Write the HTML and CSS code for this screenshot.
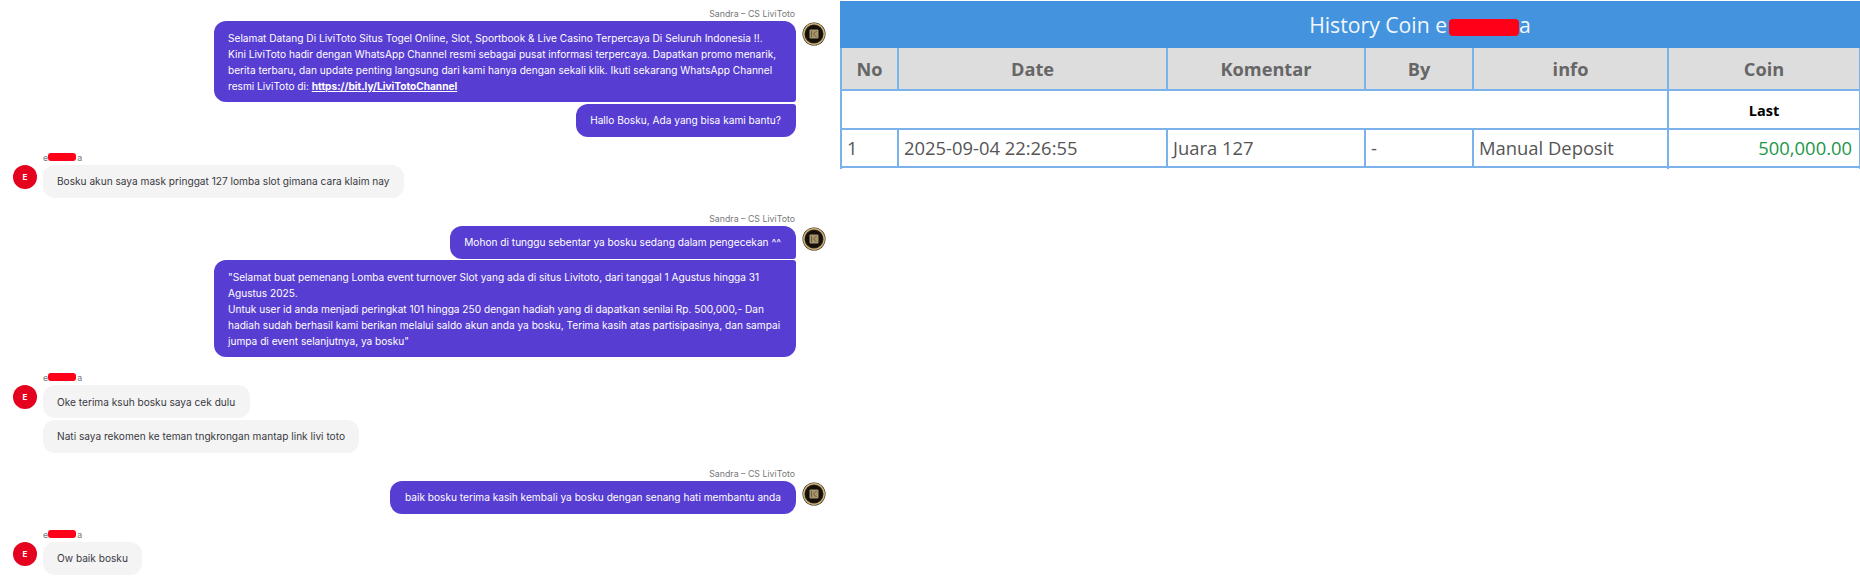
FILE: index.html
```html
<!DOCTYPE html>
<html lang="id">
<head>
<meta charset="UTF-8">
<title>History Coin</title>
<link rel="stylesheet" href="styles.css">
</head>
<body>

<svg class="defs" width="0" height="0">
  <symbol id="logo" viewBox="0 0 24 24">
    <circle cx="12" cy="12" r="11.5" fill="#2a2114"/>
    <circle cx="12" cy="12" r="10.2" fill="none" stroke="#cdb27a" stroke-width="1.5"/>
    <circle cx="12" cy="12" r="8.6" fill="#14110c"/>
    <rect x="7.5" y="7.5" width="9" height="9" rx="1" fill="#a8956c"/>
    <path d="M9.5 9v6M14.5 9l-3 3 3 3" fill="none" stroke="#6d5f43" stroke-width="1"/>
  </symbol>
</svg>

<!-- Chat -->
<div class="chat">

  <div class="group agent">
    <div class="meta">Sandra – CS LiviToto</div>
    <div class="row">
      <div class="bubbles">
        <div class="bubble">Selamat Datang Di LiviToto Situs Togel Online, Slot, Sportbook &amp; Live Casino Terpercaya Di Seluruh Indonesia !!.<br>Kini LiviToto hadir dengan WhatsApp Channel resmi sebagai pusat informasi terpercaya. Dapatkan promo menarik, berita terbaru, dan update penting langsung dari kami hanya dengan sekali klik. Ikuti sekarang WhatsApp Channel resmi LiviToto di: <a href="#">https://bit.ly/LiviTotoChannel</a></div>
        <div class="bubble">Hallo Bosku, Ada yang bisa kami bantu?</div>
      </div>
      <svg class="avatar"><use href="#logo"/></svg>
    </div>
  </div>

  <div class="group user">
    <div class="meta">e<span class="redact"></span>a</div>
    <div class="row">
      <div class="avatar initial">E</div>
      <div class="bubbles">
        <div class="bubble">Bosku akun saya mask pringgat 127 lomba slot gimana cara klaim nay</div>
      </div>
    </div>
  </div>

  <div class="group agent">
    <div class="meta">Sandra – CS LiviToto</div>
    <div class="row">
      <div class="bubbles">
        <div class="bubble">Mohon di tunggu sebentar ya bosku sedang dalam pengecekan ^^</div>
        <div class="bubble">"Selamat buat pemenang Lomba event turnover Slot yang ada di situs Livitoto, dari tanggal 1 Agustus hingga 31 Agustus 2025.<br>Untuk user id anda menjadi peringkat 101 hingga 250 dengan hadiah yang di dapatkan senilai Rp. 500,000,- Dan hadiah sudah berhasil kami berikan melalui saldo akun anda ya bosku, Terima kasih atas partisipasinya, dan sampai jumpa di event selanjutnya, ya bosku"</div>
      </div>
      <svg class="avatar"><use href="#logo"/></svg>
    </div>
  </div>

  <div class="group user">
    <div class="meta">e<span class="redact"></span>a</div>
    <div class="row">
      <div class="avatar initial">E</div>
      <div class="bubbles">
        <div class="bubble">Oke terima ksuh bosku saya cek dulu</div>
        <div class="bubble">Nati saya rekomen ke teman tngkrongan mantap link livi toto</div>
      </div>
    </div>
  </div>

  <div class="group agent">
    <div class="meta">Sandra – CS LiviToto</div>
    <div class="row">
      <div class="bubbles">
        <div class="bubble">baik bosku terima kasih kembali ya bosku dengan senang hati membantu anda</div>
      </div>
      <svg class="avatar"><use href="#logo"/></svg>
    </div>
  </div>

  <div class="group user">
    <div class="meta">e<span class="redact"></span>a</div>
    <div class="row">
      <div class="avatar initial">E</div>
      <div class="bubbles">
        <div class="bubble">Ow baik bosku</div>
      </div>
    </div>
  </div>

</div>

<!-- Tabel -->
<div class="history">
  <table>
    <colgroup>
      <col class="c-no"><col class="c-date"><col class="c-komentar"><col class="c-by"><col class="c-info"><col class="c-coin">
    </colgroup>
    <tr class="title">
      <th colspan="6">History Coin e<span class="redact"></span>a</th>
    </tr>
    <tr class="head">
      <th>No</th><th>Date</th><th>Komentar</th><th>By</th><th>info</th><th>Coin</th>
    </tr>
    <tr class="last">
      <td colspan="5"></td><td>Last</td>
    </tr>
    <tr class="data">
      <td>1</td><td>2025-09-04 22:26:55</td><td>Juara 127</td><td>-</td><td>Manual Deposit</td><td class="coin">500,000.00</td>
    </tr>
    <tr class="cut">
      <td colspan="5"></td><td></td>
    </tr>
  </table>
</div>

</body>
</html>
```

FILE: styles.css
```css
body {
  margin: 0;
  background: white;
  display: flex;
  height: 582px;
  overflow: hidden;
}

.defs { position: absolute; }

/* Chat */
.chat {
  width: 840px;
  flex: none;
  box-sizing: border-box;
  padding: 8px 14px 0 13px;
  display: flex;
  flex-direction: column;
  gap: 15px;
  font-family: Inter, "Liberation Sans", sans-serif;
  font-size: 10.15px;
  line-height: 16px;
}

.meta {
  font-size: 8.8px;
  line-height: 12px;
  color: #777;
  margin-bottom: 1px;
}

.row { display: flex; align-items: flex-start; }
.bubbles { display: flex; flex-direction: column; gap: 1.5px; }

.bubble {
  padding: 8.5px 14.5px;
  border-radius: 12px;
  max-width: 553px;
}
.bubble a { color: white; font-weight: 700; }

.avatar {
  width: 24px;
  height: 24px;
  flex: none;
}

/* Atendente */
.agent .meta { text-align: right; padding-right: 31px; }
.agent .row { justify-content: flex-end; gap: 6.5px; }
.agent .bubbles { align-items: flex-end; }
.agent .bubble { background: #583dd2; color: white; }
.agent .bubble:not(:last-child) { border-bottom-right-radius: 3px; }
.agent .bubble:not(:first-child) { border-top-right-radius: 3px; }
.agent .avatar { margin-top: 1px; }

/* Cliente */
.user .meta { padding-left: 30px; }
.user .row { gap: 5.5px; }
.user .bubbles { align-items: flex-start; }
.user .bubble { background: #f4f4f5; color: #3a3a3f; }

.initial {
  border-radius: 50%;
  background: #e4021f;
  color: white;
  font-size: 8px;
  font-weight: 700;
  line-height: 24px;
  text-align: center;
}

.redact {
  display: inline-block;
  background: #ff0018;
  border-radius: 3px;
}
.meta .redact { width: 28px; height: 8px; margin: 0 1px 0 0; }

/* Tabel */
.history {
  flex: 1;
  padding-top: 1px;
  font-family: "Open Sans", "Liberation Sans", sans-serif;
}

table {
  width: 1020px;
  table-layout: fixed;
  border-collapse: collapse;
}

.c-no { width: 57px; }
.c-date { width: 269px; }
.c-komentar { width: 198px; }
.c-by { width: 108px; }
.c-info { width: 195px; }
.c-coin { width: 192px; }

th, td { border: 2px solid #7ab3ec; padding: 0 5px; }

.title { height: 45px; }
.title th {
  background: #4393df;
  border-color: #4393df;
  color: #f2f8fd;
  font-size: 21.2px;
  font-weight: 400;
  padding-left: 144px;
}
.title .redact {
  width: 70px;
  height: 17px;
  border-radius: 4px;
  margin-left: 2px;
  vertical-align: -3px;
}

.head { height: 43px; }
.head th {
  background: #dddddd;
  color: #666;
  font-size: 18.2px;
  font-weight: 700;
}

.last { height: 39px; }
.last td:last-child {
  text-align: center;
  font-size: 14.5px;
  font-weight: 700;
  color: black;
  padding-top: 1px;
}

.data { height: 38px; }
.data td {
  font-size: 18.4px;
  color: #555;
  white-space: nowrap;
  padding-bottom: 2px;
}
.data td.coin { text-align: right; color: #1c9648; padding-right: 7px; }

.cut td { height: 1px; padding: 0; border-bottom: 0; }
```
